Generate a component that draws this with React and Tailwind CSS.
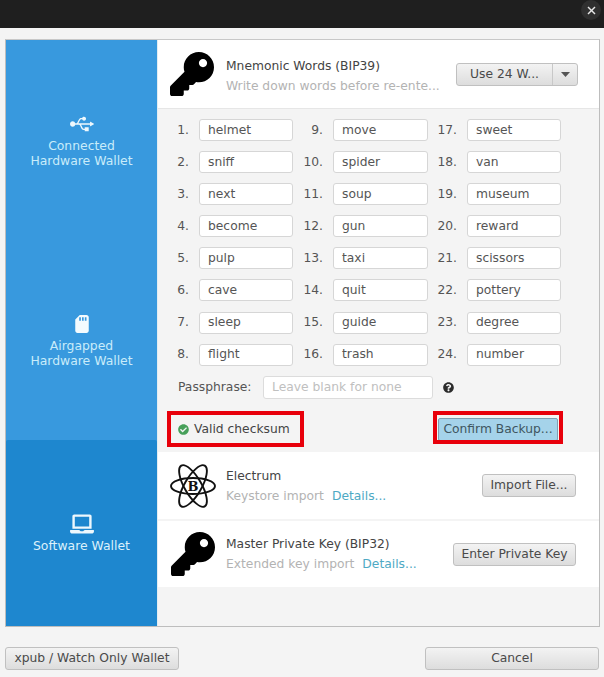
import { FaKey, FaUsb, FaSdCard, FaLaptop, FaCheckCircle, FaQuestionCircle } from "react-icons/fa";

const words = [
  "helmet", "sniff", "next", "become", "pulp", "cave", "sleep", "flight",
  "move", "spider", "soup", "gun", "taxi", "quit", "guide", "trash",
  "sweet", "van", "museum", "reward", "scissors", "pottery", "degree", "number",
];

const btn =
  "flex h-[23px] items-center justify-center rounded-[3px] border border-[#c0c0c0] bg-gradient-to-b from-[#f3f3f3] to-[#dddddd] text-[#4a4a4a] text-[12.3px] whitespace-nowrap";

const SideItem = ({ icon, lines, className }) => (
  <div className={`flex flex-col items-center justify-center text-[12.4px] leading-[15px] ${className}`}>
    <div className="mb-[3px] flex h-[22px] items-center justify-center">{icon}</div>
    {lines.map((l) => (
      <div key={l}>{l}</div>
    ))}
  </div>
);

const ElectrumIcon = () => (
  <svg width="46" height="44" viewBox="0 0 46 44" fill="none" stroke="#111" strokeWidth="1.9">
    <ellipse cx="23" cy="22" rx="22" ry="8" />
    <ellipse cx="23" cy="22" rx="23.5" ry="8.5" transform="rotate(60 23 22)" />
    <ellipse cx="23" cy="22" rx="23.5" ry="8.5" transform="rotate(120 23 22)" />
    <text x="23" y="26.5" textAnchor="middle" fontSize="13" fontWeight="700" fill="#111" stroke="none" fontFamily="'DejaVu Serif', serif">B</text>
  </svg>
);

const ImportRow = ({ icon, title, sub, right, className }) => (
  <div className={`flex items-center bg-white pl-[12px] pr-[23px] ${className}`}>
    <div className="flex w-[46px] justify-center">{icon}</div>
    <div className="ml-[10px] flex-1">
      <div className="text-[12.3px] leading-[18px] text-[#444]">{title}</div>
      <div className="mt-[2px] flex gap-[8px] text-[12.3px] leading-[18px] text-[#b3b3b3]">
        <span>{sub}</span>
        <span className="text-[#4ea9c4]">Details...</span>
      </div>
    </div>
    {right}
  </div>
);

export default function App() {
  return (
    <div className="relative flex h-[677px] w-[604px] flex-col overflow-hidden bg-[#f4f4f4] [font-family:'DejaVu_Sans',sans-serif]">
      <div className="h-[28px] bg-[#1f1f1f]" />
      <button className="absolute right-[3px] top-0 flex h-[20px] w-[20px] items-center justify-center rounded-full bg-[#303030]">
        <svg width="9" height="9" viewBox="0 0 9 9" stroke="#e8e8e8" strokeWidth="1.4">
          <line x1="1" y1="1" x2="8" y2="8" />
          <line x1="8" y1="1" x2="1" y2="8" />
        </svg>
      </button>

      <div className="ml-[5px] mt-[11px] flex h-[588px] w-[595px] border border-[#bdbdbd] border-t-[#c8c8c8]">
        <div className="flex w-[151px] flex-col bg-[#3899de]">
          <SideItem className="h-[200px] text-[#c9ecfa]" icon={<FaUsb size={24} color="#eef8fd" />} lines={["Connected", "Hardware Wallet"]} />
          <SideItem className="h-[200px] text-[#c9ecfa]" icon={<FaSdCard size={18} color="#f4fbfe" />} lines={["Airgapped", "Hardware Wallet"]} />
          <SideItem className="flex-1 rounded-t-[2px] bg-[#1e87cf] text-[#dcf1fb]" icon={<FaLaptop size={24} color="#eef8fd" />} lines={["Software Wallet"]} />
        </div>

        <div className="flex flex-1 flex-col border-l border-[#e2edf2]">
          <div className="flex h-[68px] items-center bg-white pl-[12px] pr-[21px]">
            <FaKey size={44} color="#000" />
            <div className="ml-[12px] flex-1 pt-[3px]">
              <div className="text-[12.3px] leading-[18px] text-[#444]">Mnemonic Words (BIP39)</div>
              <div className="mt-[2px] text-[12.3px] leading-[18px] text-[#b3b3b3]">Write down words before re-ente...</div>
            </div>
            <div className={`${btn} w-[122px] justify-start`}>
              <span className="flex-1 text-center">Use 24 W...</span>
              <span className="flex h-full w-[25px] items-center justify-center border-l border-[#c8c8c8]">
                <svg width="9" height="5" viewBox="0 0 9 5"><path d="M0 0h9L4.5 5z" fill="#555" /></svg>
              </span>
            </div>
          </div>

          <div className="h-[344px] border-t border-[#e6e6e6] bg-[#f4f4f4] pl-[11px] pt-[10px]">
            <div className="grid grid-flow-col grid-cols-[30px_94px_10px_30px_95px_9px_30px_94px] grid-rows-[repeat(8,22px)] gap-y-[10.1px]">
              {words.map((w, i) => {
                const col = Math.floor(i / 8);
                const labelCol = ["col-start-1", "col-start-4", "col-start-7"][col];
                const inputCol = ["col-start-2", "col-start-5", "col-start-8"][col];
                const row = [
                  "row-start-1", "row-start-2", "row-start-3", "row-start-4",
                  "row-start-5", "row-start-6", "row-start-7", "row-start-8",
                ][i % 8];
                return [
                  <div key={`l${i}`} className={`${labelCol} ${row} flex items-center justify-end pr-[10px] text-[12.3px] text-[#555]`}>
                    {i + 1}.
                  </div>,
                  <div key={w} className={`${inputCol} ${row} flex items-center rounded-[3px] border border-[#d6d6d6] bg-white pl-[8px] text-[12.3px] text-[#555]`}>
                    {w}
                  </div>,
                ];
              })}
            </div>

            <div className="mt-[10px] flex h-[23px] items-center pl-[9px]">
              <span className="w-[85px] text-[12.3px] text-[#555]">Passphrase:</span>
              <div className="flex h-[23px] w-[170px] items-center rounded-[3px] border border-[#dcdcdc] bg-white pl-[8px] text-[12.3px] text-[#c0c0c0]">
                Leave blank for none
              </div>
              <FaQuestionCircle size={11} color="#2b2b2b" className="ml-[10px]" />
            </div>

            <div className="mt-[19px] flex h-[24px] items-center justify-between pl-[9px] pr-[41px]">
              <div className="flex items-center gap-[5px] text-[12.3px] text-[#444]">
                <FaCheckCircle size={11} color="#47a05a" />
                Valid checksum
              </div>
              <div className="flex h-[23px] w-[120px] items-center justify-center rounded-[2px] border border-[#7f9fb3] bg-[#a5d3ea] text-[12.3px] text-[#3f5660]">
                Confirm Backup...
              </div>
            </div>
          </div>

          <ImportRow
            className="h-[67px]"
            icon={<ElectrumIcon />}
            title="Electrum"
            sub="Keystore import"
            right={<div className={`${btn} w-[94px]`}>Import File...</div>}
          />
          <div className="h-[2px]" />
          <ImportRow
            className="h-[66px]"
            icon={<FaKey size={44} color="#000" />}
            title="Master Private Key (BIP32)"
            sub="Extended key import"
            right={<div className={`${btn} w-[123px]`}>Enter Private Key</div>}
          />
        </div>
      </div>

      <div className="flex justify-between pl-[5px] pr-[5px] pt-[20px]">
        <div className={`${btn} w-[174px]`}>xpub / Watch Only Wallet</div>
        <div className={`${btn} w-[174px]`}>Cancel</div>
      </div>

      {/* red annotation boxes over the screenshot */}
      <div className="absolute left-[167px] top-[411px] h-[36px] w-[137px] border-4 border-[#e8000b]" />
      <div className="absolute left-[433px] top-[411px] h-[33px] w-[130px] border-4 border-[#e8000b]" />
    </div>
  );
}
